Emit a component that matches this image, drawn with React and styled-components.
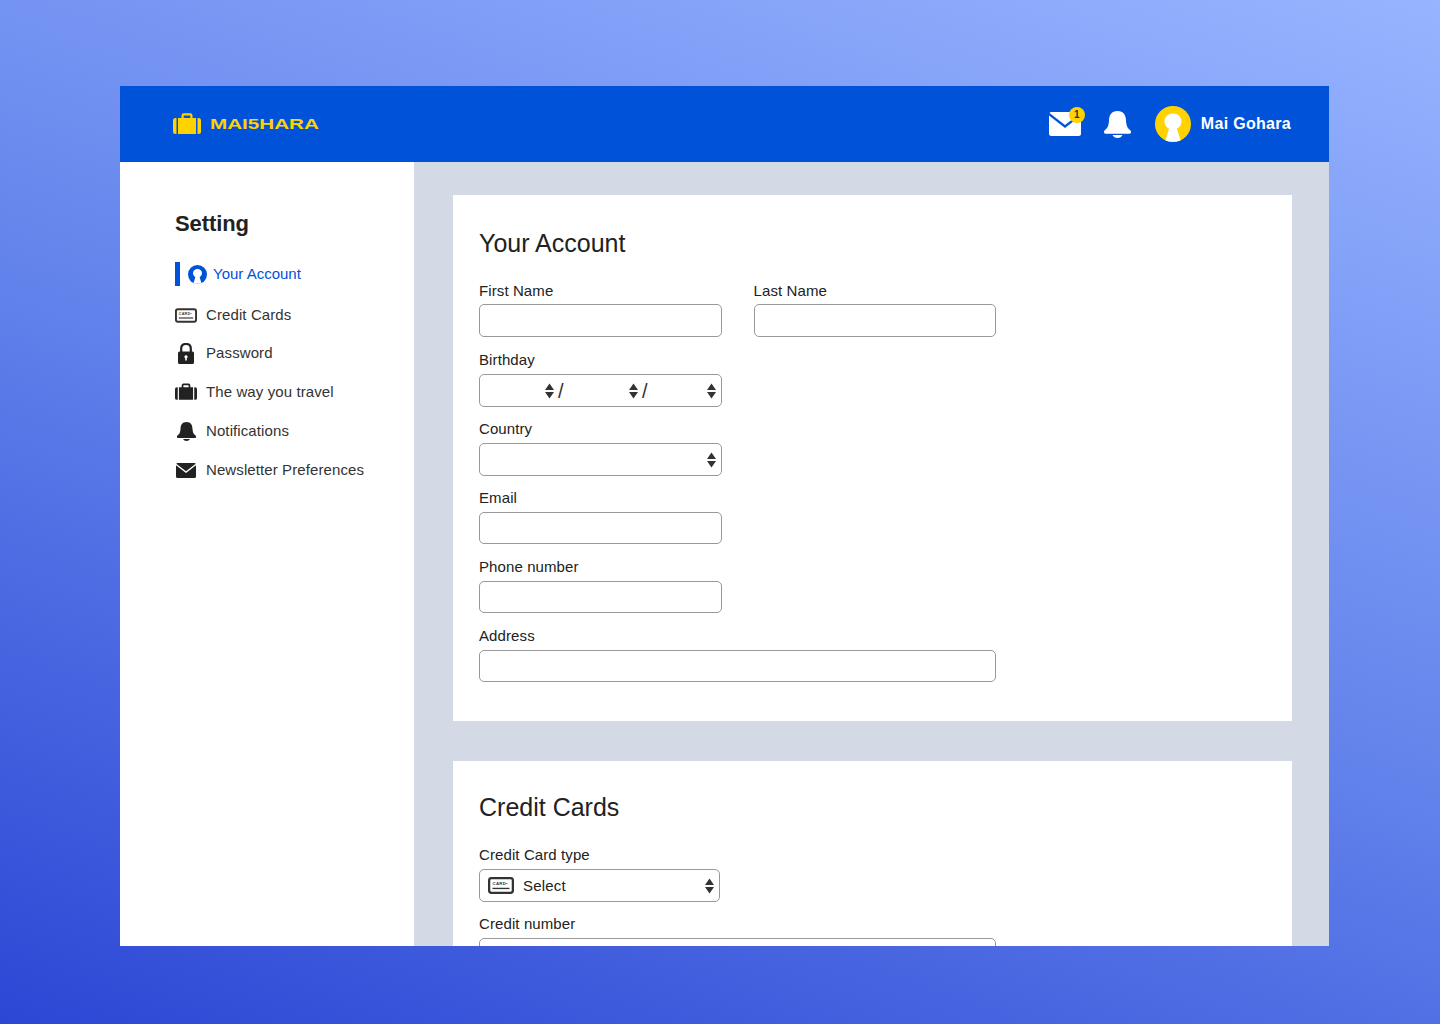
import React from 'react';
import styled, { createGlobalStyle } from 'styled-components';

const Global = createGlobalStyle`
html, body {
    margin: 0;
    padding: 0;
}
body {
    font-family: 'Liberation Sans', Arial, sans-serif;
    color: #222;
}
* {
    box-sizing: border-box;
}
`;

const Page = styled.div`
width: 1440px;
height: 1024px;
padding: 86px 111px 78px 120px;
overflow: hidden;
background: linear-gradient(20deg, #2c47d5 0%, #6484ec 50%, #97b4ff 100%);
`;

const Frame = styled.div`
height: 860px;
display: flex;
flex-direction: column;
overflow: hidden;
background: #d3dae6;
`;

const Header = styled.header`
height: 76px;
flex: none;
display: flex;
align-items: center;
justify-content: space-between;
padding: 0 38px 0 53px;
background: #0052d9;
`;

const Brand = styled.div`
display: flex;
align-items: center;
gap: 9px;
`;

const BrandName = styled.span`
display: block;
font-size: 15.5px;
font-weight: 700;
color: #ffd200;
transform: scaleX(1.33);
transform-origin: left center;
`;

const HeaderRight = styled.div`
display: flex;
align-items: center;
`;

const MailWrap = styled.div`
position: relative;
display: flex;
width: 32px;
height: 24px;
margin-right: 23px;
`;

const BellWrap = styled.div`
display: flex;
margin-right: 24px;
`;

const Badge = styled.span`
position: absolute;
top: -5px;
right: -4px;
width: 16px;
height: 16px;
border-radius: 50%;
background: #ffd200;
color: #333;
font-size: 10px;
font-weight: 700;
line-height: 16px;
text-align: center;
`;

const UserName = styled.span`
margin-left: 10px;
font-size: 16px;
font-weight: 700;
letter-spacing: 0.3px;
color: #fff;
`;

const Body = styled.div`
flex: 1;
min-height: 0;
display: flex;
`;

const Sidebar = styled.aside`
width: 294px;
flex: none;
padding: 48px 0 0 55px;
background: #fff;
`;

const SideTitle = styled.h2`
margin: 0 0 24px;
font-size: 22px;
line-height: 28px;
font-weight: 700;
letter-spacing: -0.1px;
color: #222;
`;

const NavList = styled.nav`
display: flex;
flex-direction: column;
`;

const NavItem = styled.a`
height: 24px;
margin-bottom: ${props => props.$gap}px;
display: flex;
align-items: center;
gap: ${props => props.$active ? '6px' : '9px'};
font-size: 15px;
letter-spacing: ${props => props.$active ? '0' : '0.1px'};
color: ${props => props.$active ? '#0052d9' : '#333'};
`;

const NavLabel = styled.span`
margin-bottom: 2px;
`;

const ActiveBar = styled.span`
width: 5px;
height: 24px;
margin-right: 2px;
background: #0052d9;
`;

const NavIcon = styled.span`
width: 22px;
height: 24px;
flex: none;
display: flex;
align-items: center;
justify-content: center;
`;

const Content = styled.main`
flex: 1;
display: flex;
flex-direction: column;
gap: 40px;
padding: 33px 37px 0 39px;
`;

const Card = styled.section`
flex: none;
padding: ${props => props.$top}px 26px 39px;
background: #fff;
`;

const CardTitle = styled.h1`
margin: 0 0 23px;
font-size: 25px;
line-height: 30px;
font-weight: 400;
color: #222;
`;

const Fields = styled.div`
display: flex;
flex-direction: column;
gap: 13px;
width: 517px;
`;

const Field = styled.label`
display: block;
width: ${props => props.$width || '243px'};
font-size: 15px;
letter-spacing: 0.1px;
line-height: 20px;
color: #222;
`;

const Input = styled.input`
display: block;
width: 100%;
height: 32px;
margin-top: 4px;
padding: 0 10px;
border: 1px solid #999;
border-radius: 5px;
background: #fff;
outline: none;
`;

const FieldRow = styled.div`
display: flex;
gap: 32px;

${Input} {
    height: 33px;
    margin-top: 3px;
}
`;

const SelectBox = styled.div`
height: 33px;
margin: 4px 0 -1px;
display: flex;
align-items: center;
justify-content: ${props => props.$spread ? 'space-between' : 'flex-end'};
padding: 0 5px 0 ${props => props.$spread ? '8px' : '0'};
border: 1px solid #999;
border-radius: 5px;
background: #fff;
`;

const DatePart = styled.span`
width: ${props => props.$width}px;
flex: none;
display: flex;
align-items: center;
justify-content: flex-end;
`;

const Slash = styled.span`
width: 9px;
flex: none;
padding-left: 4px;
font-size: 20px;
line-height: 20px;
color: #333;
`;

const SelectValue = styled.span`
display: flex;
align-items: center;
gap: 9px;
font-size: 15px;
letter-spacing: 0.2px;
color: #222;
`;

function Arrows() {
    return (
        <svg width="9" height="16" viewBox="0 0 9 16">
            <path d="M4.5 0.5 L9 7 H0 Z M4.5 15.5 L9 9 H0 Z" fill="#333" />
        </svg>
    );
}

function Case({ color, width = 28, height = 22 }) {
    return (
        <svg width={width} height={height} viewBox="0 0 28 22">
            <path d="M3.5 5 V21 H2.5 Q0 21 0 18.5 V7.5 Q0 5 2.5 5 Z M24.5 5 V21 H25.5 Q28 21 28 18.5 V7.5 Q28 5 25.5 5 Z" fill={color} />
            <path d="M5 5 H8.5 V2.5 Q8.5 0.3 10.7 0.3 H17.3 Q19.5 0.3 19.5 2.5 V5 H23 V21 H5 Z M10.7 5 H17.3 V2.5 H10.7 Z" fill={color} fillRule="evenodd" />
        </svg>
    );
}

function Mail({ color, width, height }) {
    return (
        <svg width={width} height={height} viewBox="0 0 32 24">
            <path d="M2.5 0 H29.5 Q31 0 31.5 1 L16 13 L0.5 1 Q1 0 2.5 0 Z" fill={color} />
            <path d="M0 3.6 L16 16 L32 3.6 V21.5 Q32 24 29.5 24 H2.5 Q0 24 0 21.5 Z" fill={color} />
        </svg>
    );
}

function Bell({ color, width, height }) {
    return (
        <svg width={width} height={height} viewBox="0 0 27 27">
            <path d="M13.5 0 C19.5 0 21.8 4 22 9.5 C22.2 14.5 23.5 17 26 19 Q27.2 20.2 27 21.5 Q26.8 22.8 25 22.8 H2 Q0.2 22.8 0 21.5 Q-0.2 20.2 1 19 C3.5 17 4.8 14.5 5 9.5 C5.2 4 7.5 0 13.5 0 Z" fill={color} />
            <path d="M8.5 24 H18.5 Q17 27 13.5 27 Q10 27 8.5 24 Z" fill={color} />
        </svg>
    );
}

function Keyhole({ size, color, inner }) {
    return (
        <svg width={size} height={size} viewBox="0 0 36 36">
            <circle cx="18" cy="18" r="18" fill={color} />
            <path d="M18 7.5 C23 7.5 26.5 11 26.5 15.5 C26.5 19 24.3 21.5 22 22.8 L25.5 34.5 Q18 37 10.5 34.5 L14 22.8 C11.7 21.5 9.5 19 9.5 15.5 C9.5 11 13 7.5 18 7.5 Z" fill={inner} />
        </svg>
    );
}

function CardIcon({ width = 23, height = 15, color = '#333' }) {
    return (
        <svg width={width} height={height} viewBox="0 0 23 15">
            <rect x="1" y="1" width="21" height="13" rx="2" fill="#fff" stroke={color} strokeWidth="2" />
            <text x="4" y="7.4" fontSize="3.8" fontWeight="700" letterSpacing="0.25" fontFamily="Liberation Sans, sans-serif" fill={color}>CARD•</text>
            <rect x="4" y="9.5" width="15" height="1.2" fill={color} />
        </svg>
    );
}

function Lock() {
    return (
        <svg width="16" height="21" viewBox="0 0 16 21">
            <path d="M3.2 9 V5.5 Q3.2 1 8 1 Q12.8 1 12.8 5.5 V9" fill="none" stroke="#222" strokeWidth="2.2" />
            <path d="M1.5 8.5 H14.5 Q16 8.5 16 10 V19.5 Q16 21 14.5 21 H1.5 Q0 21 0 19.5 V10 Q0 8.5 1.5 8.5 Z M8 12.2 A1.6 1.6 0 0 0 7.2 15.2 V17.5 H8.8 V15.2 A1.6 1.6 0 0 0 8 12.2 Z" fill="#222" fillRule="evenodd" />
        </svg>
    );
}

const navItems = [
    { label: 'Credit Cards', icon: <CardIcon />, gap: 14 },
    { label: 'Password', icon: <Lock />, gap: 15 },
    { label: 'The way you travel', icon: <Case color="#222" width={22} height={18} />, gap: 15 },
    { label: 'Notifications', icon: <Bell color="#222" width={19} height={19} />, gap: 15 },
    { label: 'Newsletter Preferences', icon: <Mail color="#222" width={20} height={15} />, gap: 0 },
];

function TextField({ label, width }) {
    return (
        <Field $width={width}>
            {label}
            <Input type="text" />
        </Field>
    );
}

function App() {
    return (
        <Page>
            <Global />
            <Frame>
                <Header>
                    <Brand>
                        <Case color="#ffd200" />
                        <BrandName>MAI5HARA</BrandName>
                    </Brand>
                    <HeaderRight>
                        <MailWrap>
                            <Mail color="#fff" width={32} height={24} />
                            <Badge>1</Badge>
                        </MailWrap>
                        <BellWrap>
                            <Bell color="#fff" width={27} height={27} />
                        </BellWrap>
                        <Keyhole size={36} color="#ffd200" inner="#fff" />
                        <UserName>Mai Gohara</UserName>
                    </HeaderRight>
                </Header>
                <Body>
                    <Sidebar>
                        <SideTitle>Setting</SideTitle>
                        <NavList>
                            <NavItem $active $gap={17}>
                                <ActiveBar />
                                <Keyhole size={19} color="#0052d9" inner="#fff" />
                                <NavLabel>Your Account</NavLabel>
                            </NavItem>
                            {navItems.map(item => (
                                <NavItem key={item.label} $gap={item.gap}>
                                    <NavIcon>{item.icon}</NavIcon>
                                    <NavLabel>{item.label}</NavLabel>
                                </NavItem>
                            ))}
                        </NavList>
                    </Sidebar>
                    <Content>
                        <Card $top={33}>
                            <CardTitle>Your Account</CardTitle>
                            <Fields>
                                <FieldRow>
                                    <TextField label="First Name" />
                                    <TextField label="Last Name" />
                                </FieldRow>
                                <Field>
                                    Birthday
                                    <SelectBox>
                                        <DatePart $width={75}><Arrows /></DatePart>
                                        <Slash>/</Slash>
                                        <DatePart $width={75}><Arrows /></DatePart>
                                        <Slash>/</Slash>
                                        <DatePart $width={69}><Arrows /></DatePart>
                                    </SelectBox>
                                </Field>
                                <Field>
                                    Country
                                    <SelectBox><Arrows /></SelectBox>
                                </Field>
                                <TextField label="Email" />
                                <TextField label="Phone number" />
                                <TextField label="Address" width="517px" />
                            </Fields>
                        </Card>
                        <Card $top={31}>
                            <CardTitle>Credit Cards</CardTitle>
                            <Fields>
                                <Field $width="241px">
                                    Credit Card type
                                    <SelectBox $spread>
                                        <SelectValue>
                                            <CardIcon width={26} height={17} />
                                            Select
                                        </SelectValue>
                                        <Arrows />
                                    </SelectBox>
                                </Field>
                                <TextField label="Credit number" width="517px" />
                            </Fields>
                        </Card>
                    </Content>
                </Body>
            </Frame>
        </Page>
    );
}

export default App;
